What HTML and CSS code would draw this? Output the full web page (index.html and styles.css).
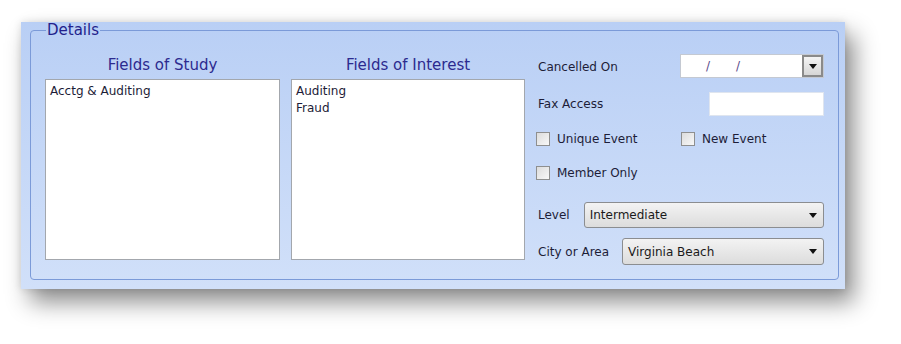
FILE: index.html
```html
<html>
<head>
<title>Event Details</title>
<meta charset="utf-8">
<link rel="stylesheet" href="styles.css">
</head>
<body>

<div class="panel">
  <fieldset class="details">
    <legend>Details</legend>

    <div class="details-body">
      <div class="list-col">
        <div class="list-title">Fields of Study</div>
        <div class="list-box study">
          <div>Acctg &amp; Auditing</div>
        </div>
      </div>

      <div class="list-col">
        <div class="list-title">Fields of Interest</div>
        <div class="list-box interest">
          <div>Auditing</div>
          <div>Fraud</div>
        </div>
      </div>

      <div class="side">
        <div class="row row-date">
          <span class="label">Cancelled On</span>
          <div class="date-box">
            <span class="date-text"><i>/</i><i>/</i></span>
            <span class="drop-btn"><b class="arrow"></b></span>
          </div>
        </div>

        <div class="row row-fax">
          <span class="label">Fax Access</span>
          <div class="text-box"></div>
        </div>

        <div class="row row-checks">
          <label class="check unique"><span class="box"></span>Unique Event</label>
          <label class="check"><span class="box"></span>New Event</label>
        </div>

        <div class="row row-member">
          <label class="check"><span class="box"></span>Member Only</label>
        </div>

        <div class="row row-level">
          <span class="label">Level</span>
          <div class="combo level">Intermediate<b class="arrow"></b></div>
        </div>

        <div class="row row-city">
          <span class="label">City or Area</span>
          <div class="combo city">Virginia Beach<b class="arrow"></b></div>
        </div>
      </div>
    </div>
  </fieldset>
</div>

</body>
</html>
```

FILE: styles.css
```css
body {
  margin: 0;
  background: #fff;
  font-family: "DejaVu Sans", Verdana, sans-serif;
  font-size: 12px;
  color: #1d1d38;
}

.panel {
  margin: 22px 0 0 21px;
  width: 824px;
  height: 267px;
  box-sizing: border-box;
  padding: 0 6px 0 9px;
  background: linear-gradient(#b9cff5, #d1e0f9);
  box-shadow: 9px 13px 22px rgba(0, 0, 0, 0.45), 0 0 8px rgba(0, 0, 0, 0.12);
}

/* Group box */

.details {
  margin: 0;
  padding: 0 14px 0 14px;
  height: 258px;
  box-sizing: border-box;
  border: 1px solid #7b9ad8;
  border-radius: 4px;
}

.details legend {
  margin-left: 1px;
  padding: 0 1px;
  font-size: 15px;
  line-height: 16px;
  color: #231f8c;
}

.details-body {
  display: flex;
  align-items: flex-start;
  padding-top: 15px;
}

/* Lists */

.list-col {
  display: flex;
  flex-direction: column;
  margin-top: 3px;
}

.list-col + .list-col {
  margin-left: 11px;
}

.list-title {
  text-align: center;
  font-size: 15px;
  line-height: 18px;
  color: #2c2a8f;
  margin-bottom: 5px;
}

.list-box {
  height: 181px;
  box-sizing: border-box;
  background: #fff;
  border: 1px solid #a3a7ad;
  padding: 3px 4px;
  line-height: 17px;
}

.study { width: 235px; }
.interest { width: 234px; }

/* Right side */

.side {
  margin-left: 11px;
  width: 288px;
  display: flex;
  flex-direction: column;
}

.row {
  display: flex;
  align-items: center;
}

.label {
  padding-left: 2px;
}

.row-date { height: 24px; justify-content: space-between; padding-top: 2px; }
.row-fax { height: 24px; margin-top: 12px; justify-content: space-between; padding-top: 1px; }
.row-checks { height: 14px; margin-top: 16px; }
.row-member { height: 14px; margin-top: 20px; }
.row-level { height: 26px; margin-top: 22px; }
.row-city { height: 27px; margin-top: 10px; }

.date-box {
  width: 144px;
  height: 24px;
  margin-top: -2px;
  box-sizing: border-box;
  display: flex;
  background: #fff;
  border: 1px solid #c4c9d2;
}

.date-text {
  flex: 1;
  line-height: 22px;
  padding-left: 25px;
}

.date-text i {
  font-style: normal;
  color: #5a4a8a;
  margin-right: 26px;
}

.drop-btn {
  width: 21px;
  box-sizing: border-box;
  border: 2px solid #8a8a8a;
  background: linear-gradient(#f4f4f4, #d6d6d6);
  display: flex;
  align-items: center;
  justify-content: center;
}

.arrow {
  width: 0;
  height: 0;
  border-left: 4px solid transparent;
  border-right: 4px solid transparent;
  border-top: 5px solid #111;
}

.text-box {
  width: 115px;
  height: 24px;
  margin-top: -1px;
  box-sizing: border-box;
  background: #fff;
  border: 1px solid #dfe5ef;
}

.check {
  display: flex;
  align-items: center;
}

.check .box {
  width: 14px;
  height: 14px;
  box-sizing: border-box;
  border: 1px solid #8e8f8f;
  background: linear-gradient(135deg, #dcdcdc, #f8f8f8);
  margin-right: 7px;
}

.unique {
  width: 145px;
}

.combo {
  flex: 1;
  height: 100%;
  box-sizing: border-box;
  display: flex;
  align-items: center;
  justify-content: space-between;
  padding: 0 6px 0 5px;
  border: 1px solid #8b8d90;
  border-radius: 3px;
  background: linear-gradient(#f3f3f3, #dcdcdc);
  color: #1a1a1a;
}

.level { margin-left: 14px; }
.city { margin-left: 13px; }
```
